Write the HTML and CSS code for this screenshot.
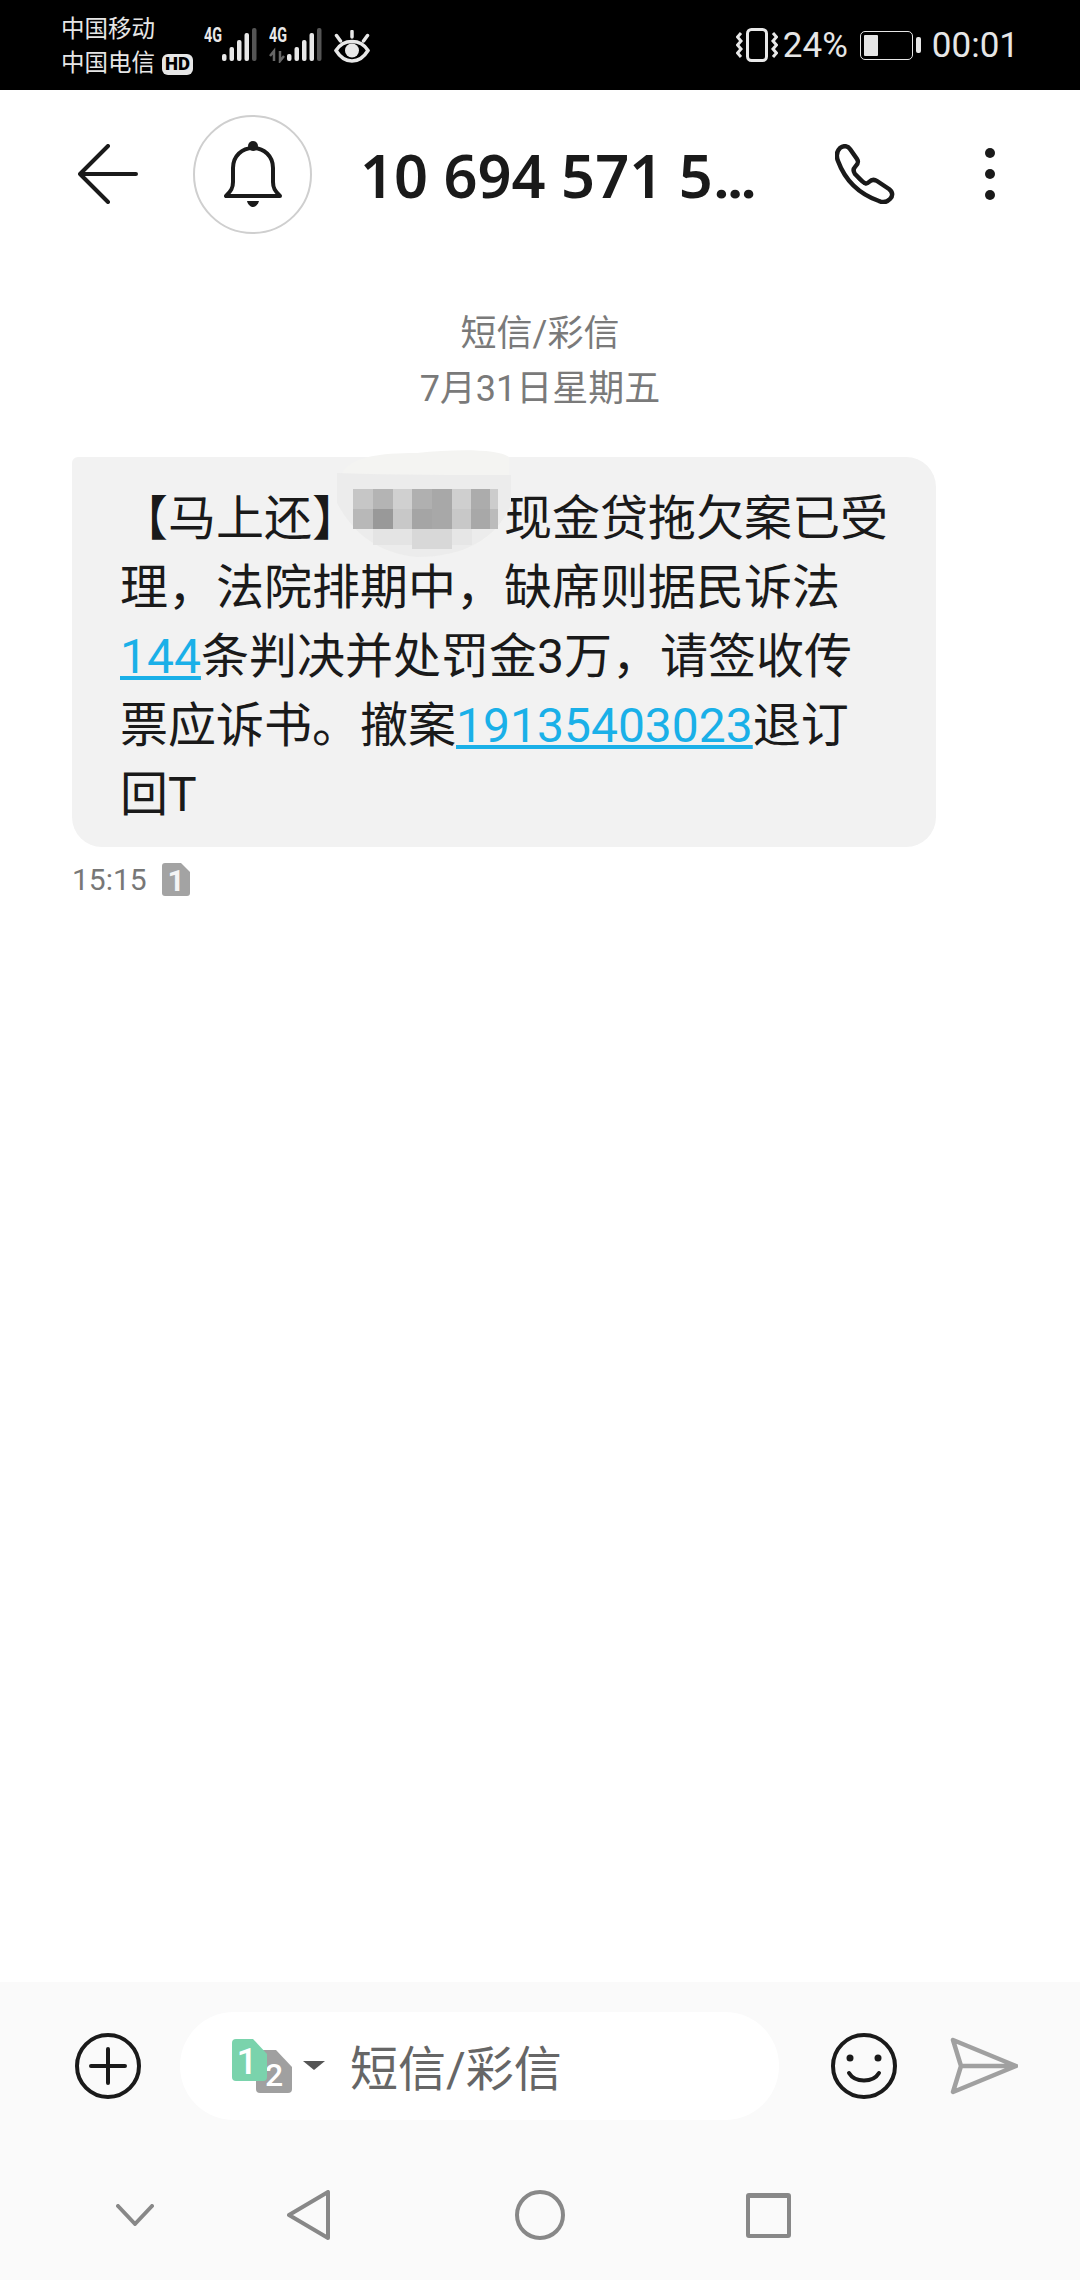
FILE: index.html
```html
<!DOCTYPE html>
<html lang="zh-CN">
    <head>
        <meta charset="UTF-8">
        <title>短信/彩信</title>
        <link rel="stylesheet" href="styles.css">
    </head>
    <body>
        <div class="status-bar">
            <div class="carriers">
                <span>中国移动</span>
                <span>中国电信<b class="hd">HD</b></span>
            </div>
            <svg class="signal" width="54" height="42" viewBox="0 -6 54 42">
                <text x="0" y="15" class="net" textLength="18" lengthAdjust="spacingAndGlyphs">4G</text>
                <rect x="18" y="27" width="4.500" height="7" rx="2" fill="#e8e8e8"/>
                <rect x="25.500" y="20" width="4.500" height="14" rx="2" fill="#e8e8e8"/>
                <rect x="33" y="13" width="4.500" height="21" rx="2" fill="#e8e8e8"/>
                <rect x="40.500" y="6" width="4.500" height="28" rx="2" fill="#e8e8e8"/>
                <rect x="48" y="1" width="4.500" height="33" rx="2" fill="#555"/>
            </svg>
            <svg class="signal signal-2" width="54" height="42" viewBox="0 -6 54 42">
                <text x="0" y="15" class="net" textLength="18" lengthAdjust="spacingAndGlyphs">4G</text>
                <path d="M5 34V24L1 29M11 24V34L15 29" fill="none" stroke="#666" stroke-width="2.500"/>
                <rect x="18" y="27" width="4.500" height="7" rx="2" fill="#e8e8e8"/>
                <rect x="25.500" y="20" width="4.500" height="14" rx="2" fill="#e8e8e8"/>
                <rect x="33" y="13" width="4.500" height="21" rx="2" fill="#e8e8e8"/>
                <rect x="40.500" y="6" width="4.500" height="28" rx="2" fill="#e8e8e8"/>
                <rect x="48" y="1" width="4.500" height="33" rx="2" fill="#555"/>
            </svg>
            <svg class="eye" width="36" height="33" viewBox="0 0 36 33" fill="none" stroke="#e8e8e8" stroke-linecap="round">
                <path d="M2 20.500C6 14 11 11.500 18 11.500S30 14 34 20.500C30 27 25 31 18 31S6 27 2 20.500Z" stroke-width="3.500"/>
                <circle cx="18" cy="20.500" r="7" fill="#e8e8e8" stroke="none"/>
                <path d="M2.500 5.500L6.500 11M18 1.500V7M33.500 5.500L29.500 11" stroke-width="3.500"/>
            </svg>
            <div class="status-right">
                <svg width="42" height="34" viewBox="0 0 42 34" fill="none" stroke="#e8e8e8" stroke-width="3">
                    <rect x="11.500" y="1.500" width="19" height="31" rx="4"/>
                    <path d="M5 5L1.500 9L5 13L1.500 17L5 21L1.500 25L5 29M37 5L40.500 9L37 13L40.500 17L37 21L40.500 25L37 29"/>
                </svg>
                <span class="percent">24%</span>
                <div class="battery"><div class="battery-level"></div></div>
                <div class="battery-nub"></div>
                <span class="clock">00:01</span>
            </div>
        </div>

        <header class="top-bar">
            <svg class="back" width="60" height="60" viewBox="0 0 60 60" fill="none" stroke="#1a1a1a" stroke-width="4" stroke-linecap="round" stroke-linejoin="round">
                <path d="M30 2L2 30L30 58M2 30H58"/>
            </svg>
            <div class="avatar">
                <svg width="58" height="66" viewBox="0 0 58 66" fill="none" stroke="#1a1a1a" stroke-width="4" stroke-linejoin="round">
                    <path d="M2 55H56C51 50 49 47 49 41V27C49 15 40 7 29 7S9 15 9 27V41C9 47 7 50 2 55Z"/>
                    <circle cx="29" cy="5" r="5" fill="#1a1a1a" stroke="none"/>
                    <path d="M23 60H35C34 64 31 66 29 66S24 64 23 60Z" fill="#1a1a1a" stroke="none"/>
                </svg>
            </div>
            <h1 class="title">10 694 571 5<span class="ellipsis">…</span></h1>
            <svg class="phone" width="60" height="60" viewBox="0 0 60 60" fill="none" stroke="#1a1a1a" stroke-width="4.500" stroke-linejoin="round">
                <path d="M5 4C9 1 13 2 15 5L22 15C24 18 23 20 20 23C18 25 18 27 20 30L27 37C30 40 32 40 34 38C36 36 39 35 42 37L54 45C58 48 58 52 55 55C52 58 48 59 44 57C24 50 10 36 3 17C1 12 2 7 5 4Z"/>
                <path d="M20 30C22 35 26 38 31 41" stroke-width="2"/>
            </svg>
            <div class="dots"><i></i><i></i><i></i></div>
        </header>

        <main class="thread">
            <div class="date-label">短信/彩信<br>7月31日星期五</div>
            <div class="bubble">
                【马上还】<span class="redact"></span>现金贷拖欠案已受<br>
                理，法院排期中，缺席则据民诉法<br>
                <a href="#">144</a>条判决并处罚金3万，请签收传<br>
                票应诉书。撤案<a href="#">19135403023</a>退订<br>
                回T
                <svg class="mosaic" width="180" height="110" viewBox="0 0 180 110">
                    <path d="M8 20C20 8 40 4 80 4C120 0 160 0 172 8V60C160 88 130 108 80 108C40 104 16 84 2 56C-2 40 0 30 8 20Z" fill="#f4f4f2"/>
                    <path d="M0 54V24C60 26 120 26 174 26V56C160 88 130 108 80 108C40 104 16 84 0 54Z" fill="#ececec"/>
                    <g fill="#c6c6c6">
                        <rect x="16" y="40" width="20" height="20"/>
                        <rect x="36" y="40" width="20" height="20" fill="#b4b4b4"/>
                        <rect x="56" y="40" width="20" height="20" fill="#d0d0d0"/>
                        <rect x="75" y="40" width="20" height="20" fill="#b0b0b0"/>
                        <rect x="95" y="40" width="20" height="20" fill="#a8a8a8"/>
                        <rect x="115" y="40" width="20" height="20" fill="#cfcfcf"/>
                        <rect x="134" y="40" width="20" height="20" fill="#acacac"/>
                        <rect x="153" y="40" width="8" height="20" fill="#ccc"/>
                        <rect x="16" y="60" width="20" height="20" fill="#b8b8b8"/>
                        <rect x="36" y="60" width="20" height="20" fill="#999"/>
                        <rect x="56" y="60" width="20" height="20" fill="#c8c8c8"/>
                        <rect x="75" y="60" width="20" height="20" fill="#a5a5a5"/>
                        <rect x="95" y="60" width="20" height="20" fill="#a8a8a8"/>
                        <rect x="115" y="60" width="20" height="20" fill="#c8c8c8"/>
                        <rect x="134" y="60" width="20" height="20" fill="#a8a8a8"/>
                        <rect x="153" y="60" width="8" height="20" fill="#bbb"/>
                        <rect x="36" y="80" width="39" height="16" fill="#e4e4e4"/>
                        <rect x="75" y="80" width="40" height="20" fill="#d8d8d8"/>
                        <rect x="115" y="80" width="20" height="16" fill="#e6e6e6"/>
                    </g>
                </svg>
            </div>
            <div class="msg-meta">
                <span>15:15</span>
                <svg class="sim-badge" width="28" height="38" viewBox="0 0 28 38">
                    <path d="M3 0H19L28 9V30A3 3 0 0 1 25 33H3A3 3 0 0 1 0 30V3A3 3 0 0 1 3 0Z" fill="#a3a3a3"/>
                    <text x="14" y="28" class="sim-num">1</text>
                </svg>
            </div>
        </main>

        <div class="composer">
            <svg width="66" height="66" viewBox="0 0 66 66" fill="none" stroke="#1a1a1a" stroke-width="4" stroke-linecap="round">
                <circle cx="33" cy="33" r="31"/>
                <path d="M16 33H50M33 16V50"/>
            </svg>
            <div class="input-pill">
                <svg class="sim-pick" width="94" height="60" viewBox="0 0 94 60">
                    <path d="M24 11H44L60 28V50A4 4 0 0 1 56 54H28A4 4 0 0 1 24 50Z" fill="#a0a0a0"/>
                    <text x="42" y="47" class="sim-two">2</text>
                    <path d="M4 0H21L35 15V38A4 4 0 0 1 31 42H4A4 4 0 0 1 0 38V4A4 4 0 0 1 4 0Z" fill="#7ad3ac"/>
                    <text x="15" y="35" class="sim-one">1</text>
                    <path d="M71 22H93L82 31Z" fill="#555"/>
                </svg>
                <span class="placeholder">短信/彩信</span>
            </div>
            <svg class="smile" width="66" height="66" viewBox="0 0 66 66" fill="none" stroke="#1a1a1a" stroke-width="4" stroke-linecap="round">
                <circle cx="33" cy="33" r="31"/>
                <circle cx="19" cy="25" r="3.500" fill="#1a1a1a" stroke="none"/>
                <circle cx="47" cy="25" r="3.500" fill="#1a1a1a" stroke="none"/>
                <path d="M18 40C24 50 42 50 48 40"/>
            </svg>
            <svg class="send" width="68" height="58" viewBox="0 0 68 58" fill="none" stroke="#a0a0a0" stroke-width="4.500" stroke-linecap="round" stroke-linejoin="round">
                <path d="M3 3L66 29L3 55L11 29ZM11 29H66"/>
            </svg>
        </div>

        <nav class="nav-bar">
            <svg class="nav-down" width="38" height="22" viewBox="0 0 38 22" fill="none" stroke="#888" stroke-width="4" stroke-linecap="round" stroke-linejoin="round">
                <path d="M2 2L19 20L36 2"/>
            </svg>
            <svg class="nav-back" width="44" height="50" viewBox="0 0 44 50" fill="none" stroke="#888" stroke-width="4" stroke-linejoin="round">
                <path d="M41 2V48L2 25Z"/>
            </svg>
            <svg class="nav-home" width="50" height="50" viewBox="0 0 50 50" fill="none" stroke="#888" stroke-width="4">
                <circle cx="25" cy="25" r="23"/>
            </svg>
            <div class="nav-recent"></div>
        </nav>
    </body>
</html>
```

FILE: styles.css
```css
html {
    background-color: white;
}

body {
    display: flex;
    flex-direction: column;
    height: 2280px;
    margin: 0;
    font-family: Roboto, "Noto Sans CJK SC", sans-serif;
    color: #1a1a1a;
    overflow: hidden;
}

/* status bar */
.status-bar {
    display: flex;
    align-items: center;
    height: 90px;
    padding: 0 61px 0 61px;
    background-color: black;
    color: #e6e6e6;
    box-sizing: border-box;
}

.carriers {
    display: flex;
    flex-direction: column;
    margin-top: 2px;
    font-size: 23.500px;
    line-height: 34px;
}

.hd {
    display: inline-block;
    margin-left: 7px;
    padding: 0 3px;
    border-radius: 6px;
    background-color: #e6e6e6;
    color: black;
    font-size: 18.500px;
    font-weight: 900;
    line-height: 21px;
    vertical-align: 1px;
}

.signal {
    flex: none;
    margin-left: 11px;
    margin-top: -6px;
}

.signal-2 {
    margin-left: 11px;
}

.net {
    font-size: 20px;
    font-weight: bold;
    fill: #e8e8e8;
}

.eye {
    flex: none;
    margin-left: 11px;
    margin-top: 2px;
}

.status-right {
    display: flex;
    align-items: center;
    margin-left: auto;
}

.percent {
    margin-left: 5px;
    font-size: 35px;
}

.battery {
    width: 53px;
    height: 29px;
    margin-left: 12px;
    padding: 3px;
    border: 1.500px solid #e6e6e6;
    border-radius: 5px;
    box-sizing: border-box;
}

.battery-level {
    width: 14px;
    height: 100%;
    background-color: #e6e6e6;
    border-radius: 1px;
}

.battery-nub {
    width: 5px;
    height: 16px;
    margin-left: 3px;
    background-color: #e6e6e6;
    border-radius: 2px;
}

.clock {
    margin-left: 11px;
    font-size: 35px;
}

/* header */
.top-bar {
    display: flex;
    align-items: center;
    height: 168px;
    padding-left: 78px;
}

.back {
    flex: none;
}

.avatar {
    display: flex;
    align-items: center;
    justify-content: center;
    flex: none;
    width: 119px;
    height: 119px;
    margin-left: 55px;
    border: 2.500px solid #cfcfcf;
    border-radius: 50%;
    box-sizing: border-box;
}

.title {
    width: 427px;
    margin: 0 0 0 48px;
    font-family: "Noto Sans", sans-serif;
    font-size: 59.500px;
    font-weight: 600;
    white-space: nowrap;
}

.ellipsis {
    font-family: Roboto, sans-serif;
    font-weight: 700;
}

.phone {
    margin-left: 48px;
}

.dots {
    display: flex;
    flex-direction: column;
    gap: 11px;
    margin-left: 90px;
}

.dots i {
    width: 10px;
    height: 10px;
    border-radius: 50%;
    background-color: #1a1a1a;
}

/* thread */
.thread {
    flex: 1;
    padding: 49px 72px 0;
}

.date-label {
    margin-bottom: 40px;
    color: #7a7a7a;
    font-size: 36px;
    line-height: 55px;
    text-align: center;
}

.bubble {
    position: relative;
    width: 864px;
    padding: 27px 0 18px 48px;
    border-radius: 6px 30px 30px 30px;
    background-color: #f2f2f2;
    box-sizing: border-box;
    font-size: 48px;
    line-height: 69px;
}

.bubble a {
    color: #1ab0e8;
}

.redact {
    display: inline-block;
    width: 3em;
}

.mosaic {
    position: absolute;
    left: 265px;
    top: -8px;
}

.msg-meta {
    display: flex;
    align-items: center;
    gap: 15px;
    margin-top: 15px;
    color: #777;
    font-size: 30px;
}

.sim-badge {
    margin-bottom: -5px;
}

.sim-num {
    font-size: 30px;
    font-weight: bold;
    fill: #f4f4f4;
    text-anchor: middle;
}

/* composer */
.composer {
    display: flex;
    align-items: center;
    height: 168px;
    padding-left: 75px;
    background-color: #fafafa;
}

.input-pill {
    display: flex;
    align-items: center;
    width: 599px;
    height: 108px;
    margin-left: 39px;
    padding-left: 52px;
    border-radius: 54px;
    background-color: white;
    box-sizing: border-box;
}

.sim-pick {
    flex: none;
    margin-top: 6px;
}

.sim-one,
.sim-two {
    font-weight: 500;
    fill: white;
    text-anchor: middle;
}

.sim-one {
    font-size: 37px;
}

.sim-two {
    font-size: 32px;
}

.placeholder {
    margin-left: 24px;
    margin-bottom: 2px;
    color: #666;
    font-size: 48px;
}

.smile {
    margin-left: 52px;
}

.send {
    margin-left: 53px;
}

/* navigation */
.nav-bar {
    display: flex;
    align-items: center;
    height: 130px;
    padding-left: 116px;
    background-color: #fafafa;
}

.nav-back {
    margin-left: 133px;
}

.nav-home {
    margin-left: 184px;
}

.nav-recent {
    width: 45px;
    height: 45px;
    margin-left: 181px;
    border: 4px solid #888;
    border-top-width: 5px;
    border-radius: 3px;
    box-sizing: border-box;
}
```
